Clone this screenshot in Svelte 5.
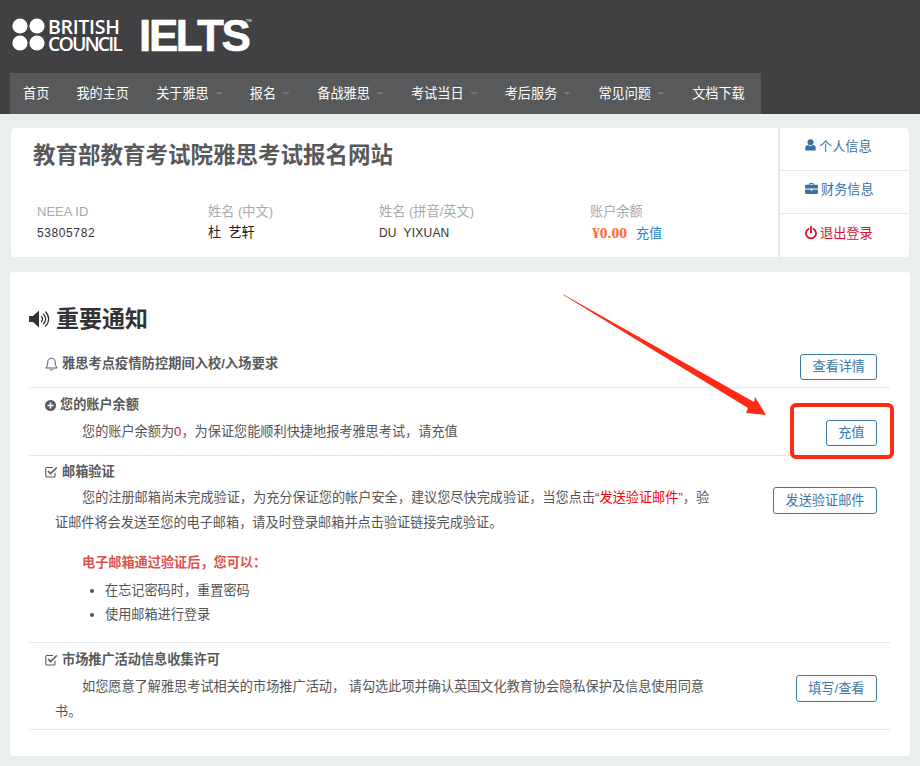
<script>
  const nav = [
    ['首页', false], ['我的主页', false], ['关于雅思', true], ['报名', true], ['备战雅思', true],
    ['考试当日', true], ['考后服务', true], ['常见问题', true], ['文档下载', false]
  ];
  const info = [
    { label: 'NEEA ID', value: '53805782', cls: 'c1' },
    { label: '姓名 (中文)', value: '杜  艺轩', cls: 'c2' },
    { label: '姓名 (拼音/英文)', value: 'DU  YIXUAN', cls: 'c3' }
  ];
</script>

<div class="page">
  <header class="top">
    <div class="brand">
      <svg class="roundels" width="34" height="34" viewBox="0 0 34 34" aria-hidden="true">
        <circle cx="8" cy="8" r="7.6" fill="#fff" /><circle cx="25" cy="8" r="7.6" fill="#fff" />
        <circle cx="8" cy="25" r="7.6" fill="#fff" /><circle cx="25" cy="25" r="7.6" fill="#fff" />
      </svg>
      <div class="bc"><span>BRITISH</span><span class="cn">COUNCIL</span></div>
      <div class="ielts">IELTS<sup>TM</sup></div>
    </div>
    <nav class="nav">
      {#each nav as [name, caret]}
        <span class="nav-item">{name}{#if caret}<i class="caret"></i>{/if}</span>
      {/each}
    </nav>
  </header>

  <section class="card profile">
    <div class="profile-main">
      <h1>教育部教育考试院雅思考试报名网站</h1>
      <div class="fields">
        {#each info as f}
          <div class={'field ' + f.cls}>
            <div class="lab">{f.label}</div>
            <div class="val">{f.value}</div>
          </div>
        {/each}
        <div class="field c4">
          <div class="lab">账户余额</div>
          <div class="val"><b class="money">¥0.00</b><span class="link">充值</span></div>
        </div>
      </div>
    </div>
    <aside class="side">
      <div class="side-row blue">
        <svg width="11" height="12" viewBox="0 0 11 12" aria-hidden="true"><circle cx="5.5" cy="3.2" r="3" fill="currentColor" /><path d="M.3 11.6V8.8C.3 7 1.6 6 3 6l2.5 1.2L8 6c1.4 0 2.7 1 2.7 2.8v2.8z" fill="currentColor" /></svg>
        个人信息
      </div>
      <div class="side-row blue">
        <svg width="13" height="11" viewBox="0 0 14 12" aria-hidden="true"><path fill-rule="evenodd" d="M4.5 2V1q0-1 1-1h3q1 0 1 1v1H13q1 0 1 1v3H0V3q0-1 1-1zM5.5 1v1h3V1zM0 7h5.8v1.2h2.4V7H14v4q0 1-1 1H1q-1 0-1-1z" fill="currentColor" /></svg>
        财务信息
      </div>
      <div class="side-row red">
        <svg width="12" height="13" viewBox="0 0 12 13" aria-hidden="true"><path d="M3.5 3a5 5 0 1 0 5 0M6 .8v5.6" fill="none" stroke="currentColor" stroke-width="1.8" stroke-linecap="round" /></svg>
        退出登录
      </div>
    </aside>
  </section>

  <section class="card notices">
    <h2>
      <svg width="22" height="18" viewBox="0 0 22 18" aria-hidden="true">
        <path d="M0 6h4l6-5.5v17L4 12H0z" fill="currentColor" />
        <path d="M12.5 6.5a3.5 3.5 0 0 1 0 5M14.5 4.2a6.5 6.5 0 0 1 0 9.6M16.6 2a9.6 9.6 0 0 1 0 14" fill="none" stroke="currentColor" stroke-width="1.3" stroke-linecap="round" />
      </svg>
      重要通知
    </h2>

    <div class="row r1">
      <div class="row-text">
        <h3>
          <svg width="13" height="14" viewBox="0 0 13 14" aria-hidden="true"><path d="M6.5 1.2c-2.5 0-3.7 1.8-3.7 3.8 0 3.2-.8 4.6-2 6h11.4c-1.2-1.4-2-2.8-2-6 0-2-1.2-3.8-3.7-3.8zM5 12.2c.3 1.4 2.7 1.4 3 0" fill="none" stroke="currentColor" stroke-width="1" /></svg>
          雅思考点疫情防控期间入校/入场要求
        </h3>
      </div>
      <button class="btn">查看详情</button>
    </div>

    <div class="row r2">
      <div class="row-text">
        <h3>
          <svg width="11" height="11" viewBox="0 0 11 11" aria-hidden="true"><circle cx="5.5" cy="5.5" r="5.5" fill="currentColor" /><path d="M5.5 2.5v6M2.5 5.5h6" stroke="#fff" stroke-width="1.6" /></svg>
          您的账户余额
        </h3>
        <p>您的账户余额为<span class="red-t">0</span>，为保证您能顺利快捷地报考雅思考试，请充值</p>
      </div>
      <button class="btn">充值</button>
    </div>

    <div class="row r3">
      <div class="row-text">
        <h3>
          <svg width="13" height="12" viewBox="0 0 13 12" aria-hidden="true"><path d="M10 6.8V10q0 1-1 1H1.8q-1 0-1-1V2.5q0-1 1-1H8" fill="none" stroke="currentColor" stroke-width="1.1" /><path d="M3 5l2.5 2.5L11.8 1.5" fill="none" stroke="currentColor" stroke-width="1.7" /></svg>
          邮箱验证
        </h3>
        <p>您的注册邮箱尚未完成验证，为充分保证您的帐户安全，建议您尽快完成验证，当您点击<span class="red-t">“发送验证邮件”</span>，验证邮件将会发送至您的电子邮箱，请及时登录邮箱并点击验证链接完成验证。</p>
        <p class="strong-red">电子邮箱通过验证后，您可以：</p>
        <ul>
          <li>在忘记密码时，重置密码</li>
          <li>使用邮箱进行登录</li>
        </ul>
      </div>
      <button class="btn">发送验证邮件</button>
    </div>

    <div class="row r4">
      <div class="row-text">
        <h3>
          <svg width="13" height="12" viewBox="0 0 13 12" aria-hidden="true"><path d="M10 6.8V10q0 1-1 1H1.8q-1 0-1-1V2.5q0-1 1-1H8" fill="none" stroke="currentColor" stroke-width="1.1" /><path d="M3 5l2.5 2.5L11.8 1.5" fill="none" stroke="currentColor" stroke-width="1.7" /></svg>
          市场推广活动信息收集许可
        </h3>
        <p>如您愿意了解雅思考试相关的市场推广活动， 请勾选此项并确认英国文化教育协会隐私保护及信息使用同意书。</p>
      </div>
      <button class="btn">填写/查看</button>
    </div>
  </section>

  <svg class="annot" width="920" height="766" viewBox="0 0 920 766" aria-hidden="true">
    <path d="M562.5 294.5 L564 294.8 L754 402 L755 397 L766 415 L746 413 L748 408 Z" fill="#ff2a14" />
    <rect x="792" y="405" width="100" height="52" rx="4" fill="none" stroke="#ff2a14" stroke-width="4" />
  </svg>
</div>

<style>
  :global(body) { margin: 0; background: #ebeeef; }
  .page {
    position: relative; width: 920px; height: 766px; overflow: hidden; background: #ebeeef;
    font-family: "Liberation Sans", "Noto Sans CJK SC", sans-serif; font-size: 13.16px; color: #555;
  }
  .top { height: 114px; background: #414042; padding-left: 10px; display: flex; flex-direction: column; justify-content: flex-end; box-sizing: border-box; }
  .brand { display: flex; align-items: center; height: 73px; padding-left: 2px; color: #fff; box-sizing: border-box; padding-bottom: 4px; }
  .bc { display: flex; flex-direction: column; margin-left: 2px; font-family: "Open Sans", sans-serif; font-size: 19.5px; font-weight: 600; line-height: 17px; letter-spacing: -0.3px; }
  .cn { letter-spacing: -1.9px; }
  .ielts { margin: 2px 0 0 18px; font-family: "Liberation Sans", sans-serif; font-weight: 700; font-size: 44px; line-height: 36px; letter-spacing: -2.4px; position: relative; -webkit-text-stroke: 0.6px #fff; }
  .ielts sup { position: absolute; font-size: 4px; line-height: 4px; top: 1px; right: -3px; font-weight: 400; letter-spacing: 0; -webkit-text-stroke: 0; }
  .nav { display: flex; align-items: center; width: 751px; height: 41px; background: #58595b; padding: 0 0 3px 13px; box-sizing: border-box; color: #fff; }
  .nav-item { display: inline-flex; align-items: center; margin-right: 27.1px; white-space: nowrap; }
  .caret { width: 0; height: 0; margin-left: 6px; margin-top: 3px; border-left: 4px solid transparent; border-right: 4px solid transparent; border-top: 3px solid #77787b; }

  .card { background: #fff; border-radius: 4px; }
  .profile { display: flex; margin: 14px 11px 0; height: 129px; }
  .profile-main { flex: 1; padding: 13px 0 0 22px; box-sizing: border-box; }
  h1 { margin: 0; font-size: 22.5px; line-height: 30px; font-weight: 700; color: #58595b; }
  .fields { display: flex; margin-top: 31px; padding-left: 4px; }
  .field { flex: none; }
  .c1 { width: 171px; } .c2 { width: 171px; } .c3 { width: 211px; }
  .c1 .lab { font-size: 13px; }
  .lab { color: #a7a9ac; line-height: 20px; }
  .val { color: #333; font-size: 12px; line-height: 20px; margin-top: 1px; letter-spacing: 0.6px; white-space: pre; }
  .c2 .val { font-size: 13.16px; letter-spacing: 0; color: #222; }
  .c3 .val { letter-spacing: 0.2px; }
  .money { color: #ff6c2f; font-family: "Liberation Serif", serif; font-size: 15.5px; letter-spacing: 0; margin-left: 2px; }
  .link { color: #1e88c7; font-size: 13.16px; margin-left: 9px; letter-spacing: 0; }
  .side { width: 131px; flex: none; border-left: 2px solid #e6e7e8; display: flex; flex-direction: column; box-sizing: border-box; }
  .side-row { height: 42px; display: flex; align-items: center; padding: 0 0 8px 25px; gap: 3px; box-sizing: border-box; }
  .side-row + .side-row { border-top: 1px solid #e6e7e8; height: 43px; }
  .side-row:last-child { flex: 1; padding-bottom: 6px; }
  .blue { color: #3a6f9f; } .red { color: #d4112e; }

  .notices { margin: 15px 10px 0; height: 484px; padding: 32px 20px 0 19px; box-sizing: border-box; }
  h2 { display: flex; align-items: center; gap: 5px; margin: 0; font-size: 23px; line-height: 30px; font-weight: 700; color: #333; }
  h2 svg { color: #333; }
  .row { display: flex; justify-content: space-between; align-items: flex-start; border-bottom: 1px solid #e6e7e8; padding-left: 16px; padding-right: 13px; box-sizing: border-box; }
  .row-text { width: 666px; }
  h3 { display: flex; align-items: center; gap: 4px; margin: 0; font-size: 13.16px; line-height: 20px; font-weight: 700; color: #58595b; }
  .r1 h3 { letter-spacing: 0.12px; }
  p { margin: 4px 0 0; padding-left: 10px; text-indent: 27px; line-height: 25px; color: #555; font-size: 13.16px; }
  .red-t { color: #f00; }
  .strong-red { color: #d9534f; font-weight: 700; margin-top: 15px; }
  ul { margin: 4px 0 0; padding-left: 60px; line-height: 24px; color: #555; }
  .btn { margin: 0; flex: none; height: 26px; padding: 0 11.5px; background: #fff; border: 1px solid #3a78a8; border-radius: 3px; color: #3a78a8; font: inherit; line-height: 24px; }
  .r1 { height: 51px; margin-top: 3px; padding-top: 17px; } .r1 .btn { padding: 0 11px; }
  .r2 { height: 68px; padding-top: 7px; } .r2 .btn { margin-top: 25px; }
  .r3 { height: 187px; padding-top: 6px; } .r3 p:first-of-type { margin-top: 3px; } .r3 .btn { height: 27px; margin-top: 25px; }
  .r4 { height: 87px; padding-top: 7px; } .r4 .btn { height: 27px; margin-top: 25px; }
  .annot { position: absolute; left: 0; top: 0; pointer-events: none; }
</style>
